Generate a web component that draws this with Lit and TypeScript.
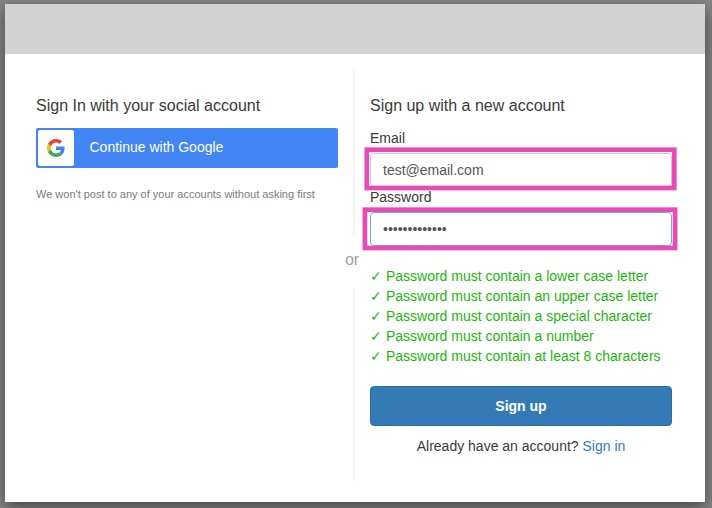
import { LitElement, html, css } from "lit";
import { customElement, property } from "lit/decorators.js";

@customElement("google-mark")
class GoogleMark extends LitElement {
  static styles = css`
    :host { display: block; width: 18px; height: 18px; }
    svg { display: block; }
  `;
  render() {
    return html`<svg width="18" height="18" viewBox="0 0 48 48" aria-hidden="true">
      <path fill="#EA4335" d="M24 9.5c3.54 0 6.71 1.22 9.21 3.6l6.85-6.85C35.9 2.38 30.47 0 24 0 14.62 0 6.51 5.38 2.56 13.22l7.98 6.19C12.43 13.72 17.74 9.5 24 9.5z"/>
      <path fill="#4285F4" d="M46.98 24.55c0-1.57-.15-3.09-.38-4.55H24v9.02h12.94c-.58 2.96-2.26 5.48-4.78 7.18l7.73 6c4.51-4.18 7.09-10.36 7.09-17.65z"/>
      <path fill="#FBBC05" d="M10.53 28.59c-.48-1.45-.76-2.99-.76-4.59s.27-3.14.76-4.59l-7.98-6.19C.92 16.46 0 20.12 0 24c0 3.88.92 7.54 2.56 10.78l7.97-6.19z"/>
      <path fill="#34A853" d="M24 48c6.48 0 11.93-2.13 15.89-5.81l-7.73-6c-2.15 1.45-4.92 2.3-8.16 2.3-6.26 0-11.57-4.22-13.47-9.91l-7.98 6.19C6.51 42.62 14.62 48 24 48z"/>
    </svg>`;
  }
}

@customElement("form-field")
class FormField extends LitElement {
  @property() label = "";
  @property() type = "text";
  @property() value = "";
  @property({ type: Boolean, reflect: true }) active = false;

  static styles = css`
    :host { display: block; }
    label { display: block; line-height: 20px; margin-bottom: 5px; }
    .control { position: relative; height: 34px; }
    input {
      display: block; box-sizing: border-box; width: 100%; height: 34px;
      margin: 0; padding: 6px 12px; border: 1px solid #ccc; border-radius: 4px;
      background: #fff; color: #555; outline: none;
      font: 14px/20px "Liberation Sans", Arial, sans-serif;
    }
    :host([active]) input { border-color: #66afe9; }
    .outline {
      position: absolute; top: 0; left: 0; width: 302px; height: 34px;
      overflow: visible; pointer-events: none;
    }
    .outline rect { fill: none; stroke: #e84bb5; stroke-width: 4.7px; }
  `;
  render() {
    return html`<label for="input">${this.label}</label>
      <div class="control">
        <input id="input" type=${this.type} .value=${this.value} />
        <svg class="outline" aria-hidden="true">
          <rect
            x=${this.active ? -5.1 : -3.2}
            y=${this.active ? -2.3 : -3.3}
            width=${this.active ? 310.2 : 307.5}
            height="38.3"
          />
        </svg>
      </div>`;
  }
}

@customElement("app-root")
class AppRoot extends LitElement {
  static styles = css`
    :host {
      display: block; box-sizing: border-box; height: 508px; overflow: hidden;
      padding: 4px 7px 6px 5px; background: #868686; color: #3a3a3a;
      font: 14px/20px "Liberation Sans", Arial, sans-serif;
    }
    .modal {
      display: flex; flex-direction: column; height: 498px; background: #fff;
      box-shadow: 0 5px 15px rgba(0, 0, 0, 0.5);
    }
    .banner { height: 50px; background: #d3d3d3; }
    .body { display: grid; grid-template-columns: 302px 32px 302px; padding: 16px 31px; height: 412px; }
    .social, .signup { padding-top: 25px; }
    h1 { margin: 0; font-size: 16px; font-weight: 400; line-height: 22px; }
    .google {
      display: flex; align-items: center; box-sizing: border-box;
      width: 302px; height: 40px; margin: 11px 0 16px; padding: 0 2px;
      border: 0; border-radius: 2px; background: #4285f4; color: #fff;
      font: 14px/20px "Liberation Sans", Arial, sans-serif;
    }
    .logo {
      display: flex; align-items: center; justify-content: center;
      width: 36px; height: 36px; margin-right: 15.5px; border-radius: 2px; background: #fff;
    }
    .caption { padding-bottom: 2px; }
    .note { margin: 0; font-size: 11px; line-height: 20px; color: #7b7b7b; }
    .divider { display: flex; flex-direction: column; align-items: center; }
    .rule { width: 2px; background: #f2f2f2; }
    .upper { height: 164px; }
    .lower { height: 193px; }
    .or { height: 54px; line-height: 51px; font-size: 16px; color: #a0a0a0; margin-right: 4px; }
    .signup h1 { margin-bottom: 11px; }
    .rules { margin: 20px 0; padding: 0; list-style: none; color: #1bb70b; }
    .submit {
      display: block; box-sizing: border-box; width: 100%; height: 40px; margin: 0 0 10px;
      border: 1px solid #2e6da4; border-radius: 4px; background: #337ab7; color: #fff;
      font: bold 14px/20px "Liberation Sans", Arial, sans-serif;
    }
    .switch { margin: 0; text-align: center; }
    a { color: #337ab7; text-decoration: none; }
  `;

  private rules = [
    "Password must contain a lower case letter",
    "Password must contain an upper case letter",
    "Password must contain a special character",
    "Password must contain a number",
    "Password must contain at least 8 characters",
  ];

  render() {
    return html`<main class="modal">
      <header class="banner"></header>
      <div class="body">
        <section class="social">
          <h1>Sign In with your social account</h1>
          <button class="google">
            <span class="logo"><google-mark></google-mark></span>
            <span class="caption">Continue with Google</span>
          </button>
          <p class="note">We won't post to any of your accounts without asking first</p>
        </section>
        <div class="divider">
          <div class="rule upper"></div>
          <span class="or">or</span>
          <div class="rule lower"></div>
        </div>
        <section class="signup">
          <h1>Sign up with a new account</h1>
          <form-field label="Email" value="test@email.com"></form-field>
          <form-field label="Password" type="password" value="Passw0rd!2345" active></form-field>
          <ul class="rules">${this.rules.map((rule) => html`<li>✓ ${rule}</li>`)}</ul>
          <button class="submit">Sign up</button>
          <p class="switch">Already have an account? <a href="#">Sign in</a></p>
        </section>
      </div>
    </main>`;
  }
}
